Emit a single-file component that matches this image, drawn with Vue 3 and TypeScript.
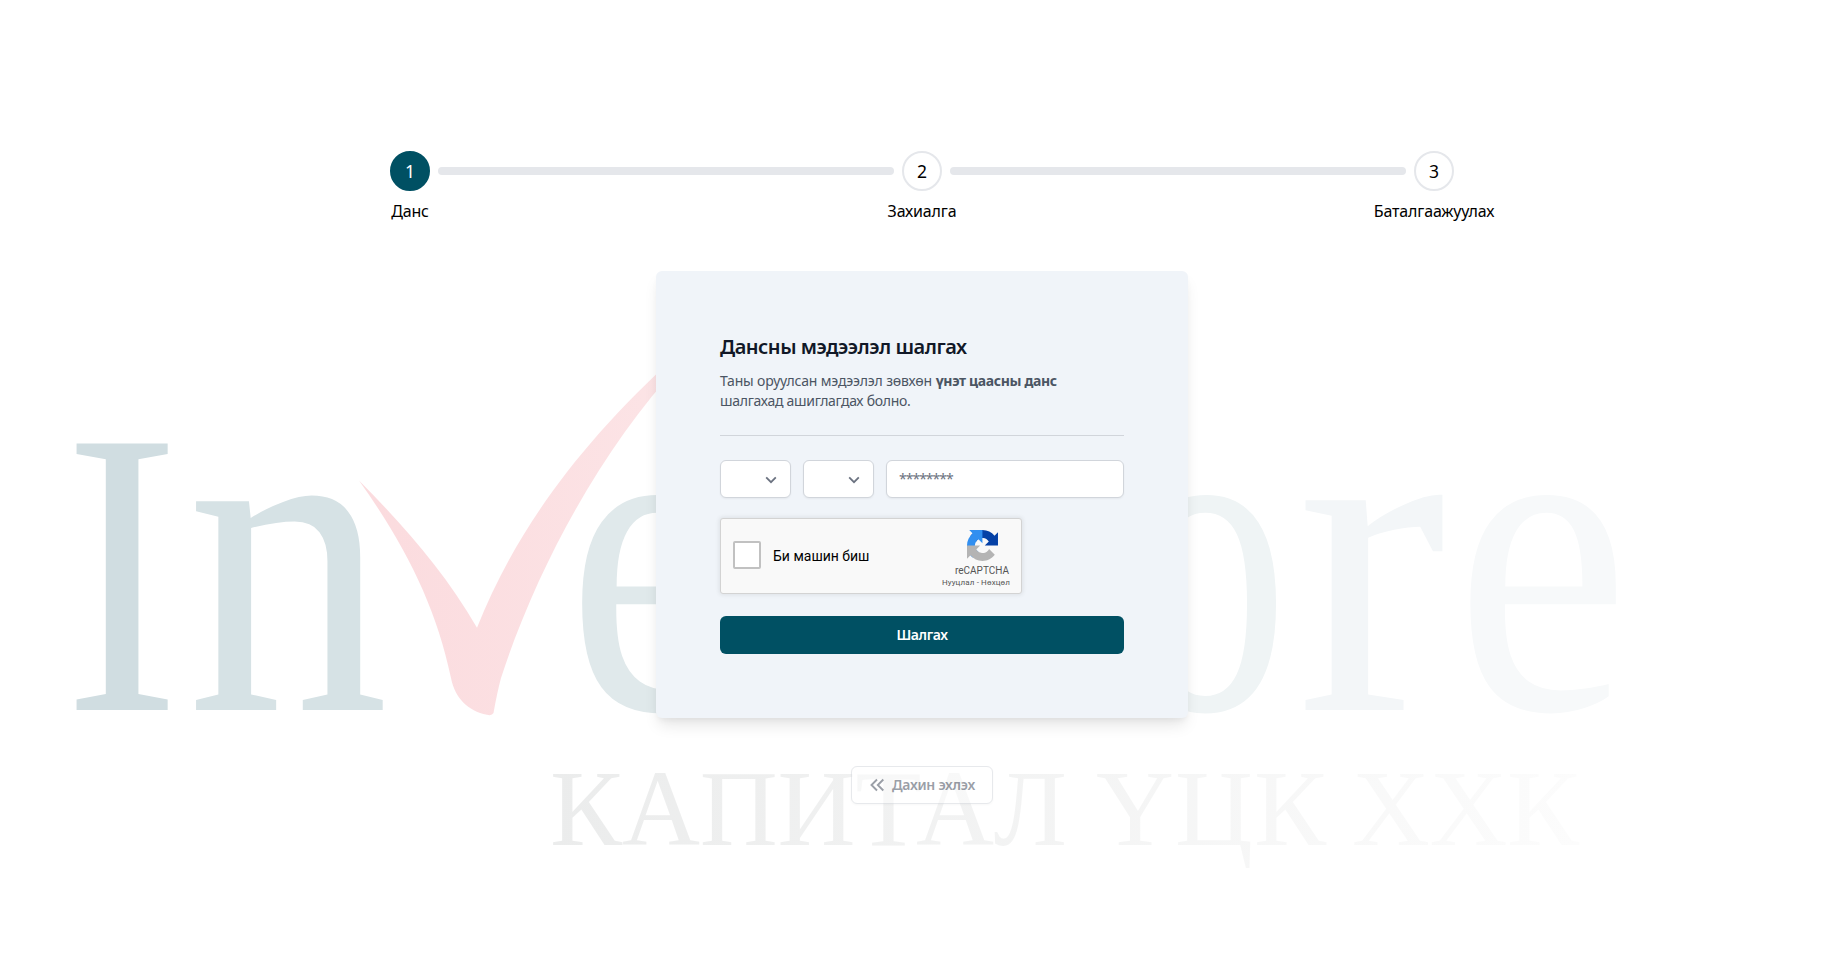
<script setup lang="ts">
interface Step { id: number; label: string; active: boolean }
const steps: Step[] = [
  { id: 1, label: 'Данс', active: true },
  { id: 2, label: 'Захиалга', active: false },
  { id: 3, label: 'Баталгаажуулах', active: false },
]

interface Letter { char: string; x: number; y: number; sx: number; sy: number; tone: string }
const letters: Letter[] = [
  { char: 'I', x: 64, y: 710, sx: 3.48, sy: 4.07, tone: '#d0dde1' },
  { char: 'n', x: 186.8, y: 710, sx: 4.04, sy: 4.55, tone: '#d6e2e5' },
  { char: 'e', x: 567, y: 709, sx: 3.88, sy: 4.54, tone: '#e0e9eb' },
  { char: 'o', x: 1123.6, y: 709, sx: 3.3, sy: 4.54, tone: '#eff4f5' },
  { char: 'r', x: 1296.5, y: 710, sx: 4.5, sy: 4.57, tone: '#f3f6f8' },
  { char: 'e', x: 1455, y: 709, sx: 3.93, sy: 4.54, tone: '#f7f9fa' },
]
</script>

<template>
  <main class="page">
    <svg class="watermark" width="1846" height="979" viewBox="0 0 1846 979" aria-hidden="true">
      <defs>
        <linearGradient id="sub" gradientUnits="userSpaceOnUse" x1="552" y1="0" x2="1577" y2="0">
          <stop offset="0" stop-color="#ebecec" />
          <stop offset="1" stop-color="#fcfcfc" />
        </linearGradient>
        <linearGradient id="tick" x1="0" y1="0" x2="1" y2="0">
          <stop offset="0" stop-color="#fbdbde" />
          <stop offset="1" stop-color="#fce4e6" />
        </linearGradient>
      </defs>
      <text
        v-for="(l, i) in letters"
        :key="i"
        class="brand"
        :fill="l.tone"
        :transform="`translate(${l.x} ${l.y}) scale(${l.sx} ${l.sy})`"
      >{{ l.char }}</text>
      <path
        fill="url(#tick)"
        d="M359 480.500C405 527 444 571 477 627.700C513 538 571 451 680 352L680 364C604 446 538 564 501 678Q497 693 493.500 713Q492 716 487 714.800C468 711 455 698 451 678C436 606 405 545 359 480.500Z"
      />
      <g class="sub" fill="url(#sub)">
        <text x="550" y="845" textLength="517">КАПИТАЛ</text>
        <text x="1096" y="845" textLength="230">ҮЦК</text>
        <text x="1352" y="845" textLength="227">ХХК</text>
      </g>
    </svg>

    <ol class="steps">
      <template v-for="(s, i) in steps" :key="s.id">
        <li class="step">
          <span class="dot" :class="{ on: s.active }">{{ s.id }}</span>
          <span class="label">{{ s.label }}</span>
        </li>
        <li v-if="i < steps.length - 1" class="bar"></li>
      </template>
    </ol>

    <section class="card">
      <h1>Дансны мэдээлэл шалгах</h1>
      <p><span class="lead">Таны оруулсан мэдээлэл зөвхөн</span> <b>үнэт цаасны данс</b><br /><span class="tail">шалгахад ашиглагдах болно.</span></p>
      <div class="fields">
        <button v-for="n in 2" :key="n" class="select" type="button">
          <svg width="12" height="12" viewBox="0 0 12 12"><path d="M1.200 3.400 6 8.200l4.800-4.800" fill="none" stroke="#6b7280" stroke-width="1.800" /></svg>
        </button>
        <div class="input">********</div>
      </div>
      <div class="captcha">
        <span class="box"></span>
        <span class="robot">Би машин биш</span>
        <div class="badge">
          <svg width="31" height="31" viewBox="0 0 64 64">
            <path fill="#0541a6" d="M64 31.955l-.033-1.370V4.687l-7.160 7.160C50.948 4.674 42.033.093 32.050.093c-10.390 0-19.622 4.960-25.463 12.638l11.736 11.860a15.550 15.550 0 0 1 4.754-5.334c2.050-1.600 4.952-2.906 8.968-2.906.485 0 .860.057 1.135.163 4.976.393 9.288 3.140 11.828 7.124l-8.307 8.307L64 31.953" />
            <path fill="#318ff0" d="M31.862.094l-1.370.033H4.594l7.160 7.160C4.580 13.147 0 22.060 0 32.046c0 10.390 4.960 19.622 12.638 25.463L24.500 45.773a15.550 15.550 0 0 1-5.334-4.754c-1.600-2.050-2.906-4.952-2.906-8.968 0-.485.057-.860.163-1.135.393-4.976 3.140-9.288 7.124-11.828l8.307 8.307L31.860.095" />
            <path fill="#b4b4b4" d="M.001 32.045l.033 1.370v25.898l7.160-7.160c5.860 7.173 14.774 11.754 24.760 11.754 10.390 0 19.622-4.960 25.463-12.638l-11.736-11.860a15.550 15.550 0 0 1-4.754 5.334c-2.050 1.600-4.952 2.906-8.968 2.906-.485 0-.860-.057-1.135-.163-4.976-.393-9.288-3.140-11.828-7.124l8.307-8.307c-10.522.040-22.400.066-27.295-.005" />
          </svg>
          <span class="name">reCAPTCHA</span>
          <span class="terms">Нууцлал - Нөхцөл</span>
        </div>
      </div>
      <button class="submit" type="button">Шалгах</button>
    </section>

    <button class="restart" type="button">
      <svg width="16" height="16" viewBox="0 0 16 16"><path d="M8 2.500 2.500 8 8 13.500M14.300 2.500 8.800 8l5.500 5.500" fill="none" stroke="#374151" stroke-width="1.900" /></svg>
      <span>Дахин эхлэх</span>
    </button>
  </main>
</template>

<style scoped>
.page { position: relative; height: 979px; display: flex; flex-direction: column; align-items: center; overflow: hidden; background: #fff; font-family: "Noto Sans", "Open Sans", sans-serif; box-sizing: border-box; padding: 151px 2px 0 0; }
.watermark { position: absolute; inset: 0; }
.brand { font: 100px "Liberation Serif", serif; }
.sub { font: 108px "Liberation Serif", serif; }
.steps, .card, .restart { position: relative; }
.steps { list-style: none; margin: 0; padding: 0; width: 1064px; height: 120px; display: flex; gap: 8px; align-items: flex-start; }
.step { width: 40px; display: flex; flex-direction: column; align-items: center; }
.dot { box-sizing: border-box; width: 40px; height: 40px; flex: none; border: 2px solid #e5e7eb; border-radius: 50%; background: #fff; display: flex; align-items: center; justify-content: center; font-size: 17.5px; color: #000; padding-bottom: 1px; }
.dot.on { background: #005063; border-color: #005063; color: #fff; }
.label { margin-top: 8px; font-size: 16px; line-height: 24px; letter-spacing: -.16px; white-space: nowrap; color: #000; }
.bar { flex: 1; height: 8px; margin-top: 16px; border-radius: 4px; background: #e5e7eb; }
.card { box-sizing: border-box; width: 532px; height: 447px; padding: 62px 64px 0; border-radius: 6px; background: #f0f4f9; box-shadow: 0 10px 15px -3px rgba(0,0,0,.1), 0 4px 6px -2px rgba(0,0,0,.05); }
h1 { margin: 0; font-size: 20px; font-weight: 600; line-height: 28px; letter-spacing: -.49px; color: #111827; white-space: nowrap; }
p { margin: 10px 0 0; font-size: 14px; line-height: 20px; color: #4b5563; padding-bottom: 24px; border-bottom: 1px solid #d1d5db; white-space: nowrap; }
.lead { letter-spacing: -.16px; }
.tail { letter-spacing: -.27px; }
b { letter-spacing: -.36px; }
.fields { display: grid; grid-template-columns: 71px 71px 1fr; gap: 12px; margin-top: 24px; }
.select, .input { box-sizing: border-box; height: 38px; border: 1px solid #d1d5db; border-radius: 6px; background: #fff; box-shadow: 0 1px 2px rgba(0,0,0,.05); display: flex; align-items: center; }
.select { justify-content: flex-end; padding: 2px 13px 0; }
.input { padding: 0 12px 1px; font-size: 14px; letter-spacing: -1px; color: #6b7280; }
.captcha { box-sizing: border-box; width: 302px; height: 76px; margin-top: 20px; border: 1px solid #d3d3d3; border-radius: 3px; background: #f9f9f9; box-shadow: 0 0 4px 1px rgba(0,0,0,.08); display: flex; align-items: center; font-family: Roboto, sans-serif; padding: 0 4px 0 12px; }
.box { box-sizing: border-box; width: 28px; height: 28px; margin-bottom: 2px; border: 2px solid #c1c1c1; border-radius: 2px; background: #fff; }
.robot { margin-left: 12px; font-size: 14px; line-height: 17px; color: #000; flex: 1; }
.badge { align-self: flex-start; display: flex; flex-direction: column; align-items: center; width: 70px; padding-top: 11px; color: #555; white-space: nowrap; }
.name { font-size: 10px; line-height: 12px; margin-top: 4px; }
.terms { font-size: 8px; line-height: 10px; margin-top: 1px; letter-spacing: .13px; margin-right: 12px; }
.submit { display: block; width: 404px; height: 38px; margin-top: 22px; padding: 0 0 2px; border: 0; border-radius: 6px; background: #005063; color: #fff; font: 600 14px "Noto Sans", sans-serif; letter-spacing: -.4px; }
.restart { box-sizing: border-box; margin-top: 48px; width: 142px; height: 38px; border: 1px solid #d1d5db; border-radius: 6px; background: #fff; opacity: .5; box-shadow: 0 1px 2px rgba(0,0,0,.05); display: flex; align-items: center; gap: 7px; padding: 0 17px 1px; font: 600 14px "Noto Sans", sans-serif; letter-spacing: -.25px; color: #374151; white-space: nowrap; }
</style>
